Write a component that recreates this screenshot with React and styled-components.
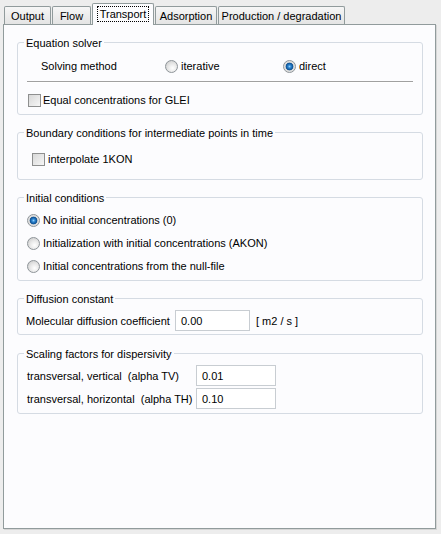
import React from "react"
import styled, { createGlobalStyle } from "styled-components"

const GlobalStyle = createGlobalStyle`
    body {
        margin: 0;
        background: #ededed;
        font-family: "Liberation Sans", Arial, sans-serif;
        font-size: 11px;
        color: #000;
    }
`

const Window = styled.div`
    width: 441px;
    height: 534px;
    padding: 3px 0 0 3px;
    box-sizing: border-box;
`

const TabBar = styled.div`
    display: flex;
    align-items: flex-end;
    height: 21px;
    padding-left: 1px;
`

const Tab = styled.div`
    box-sizing: border-box;
    width: ${(p) => p.$w}px;
    height: ${(p) => (p.$active ? 22 : 18)}px;
    margin-right: 1px;
    margin-bottom: ${(p) => (p.$active ? -1 : 0)}px;
    position: relative;
    z-index: ${(p) => (p.$active ? 2 : 0)};
    display: flex;
    align-items: center;
    justify-content: center;
    border: 1px solid #919b9c;
    border-bottom: none;
    border-radius: 2px 2px 0 0;
    background: ${(p) => (p.$active ? "#fcfcfe" : "linear-gradient(#f6f6f6, #e4e4e4)")};
    padding-top: 1px;
    padding-bottom: ${(p) => (p.$active ? 2 : 0)}px;
`

const FocusLabel = styled.span`
    outline: 1px dotted #000;
    outline-offset: 1px;
    padding: 0 1px;
`

const Panel = styled.div`
    box-sizing: border-box;
    width: 433px;
    height: 505px;
    border: 1px solid #919b9c;
    background: #fcfcfe;
    box-shadow: 1px 1px 0 #d6d6d6;
    padding: 17px 12px 0 13px;
    display: flex;
    flex-direction: column;
    gap: 17px;
`

const Group = styled.div`
    position: relative;
    border: 1px solid #d5dbe3;
    border-radius: 3px;
    padding: ${(p) => p.$pad};
    margin-top: ${(p) => p.$mt || 0}px;
    display: flex;
    flex-direction: column;
    gap: ${(p) => p.$gap || 0}px;
`

const Legend = styled.span`
    position: absolute;
    top: -6px;
    left: 6px;
    padding: 0 2px;
    background: #fcfcfe;
    line-height: 13px;
`

const SolverRow = styled.div`
    display: grid;
    grid-template-columns: 124px 118px auto;
    align-items: center;
    height: 20px;
    padding-left: 23px;
`

const Separator = styled.div`
    margin: 5px 9px 0;
    border-top: 1px solid #a0a0a0;
    border-bottom: 1px solid #fff;
`

const Option = styled.label`
    display: flex;
    align-items: center;
    gap: ${(p) => p.$gap || 2}px;
    height: 16px;
    margin-left: ${(p) => p.$indent || 0}px;
    margin-top: ${(p) => p.$top || 0}px;
`

const RadioMark = styled.span`
    flex: none;
    box-sizing: border-box;
    width: 13px;
    height: 13px;
    border-radius: 50%;
    border: 1px solid #8e9499;
    background: ${(p) =>
        p.$checked
            ? "radial-gradient(circle at 50% 50%, #8fd0ff 0, #2f86d0 1.5px, #0c4f92 3.5px, #d8d8d8 4.2px, #fafafa 100%)"
            : "radial-gradient(circle at 60% 65%, #ffffff 0, #e8e8e8 45%, #c4c4c4 100%)"};
`

const CheckMark = styled.span`
    flex: none;
    box-sizing: border-box;
    width: 13px;
    height: 13px;
    border: 1px solid #8e8f8f;
    background: linear-gradient(135deg, #d8d8d8, #f6f6f6);
`

const FieldRow = styled.div`
    display: grid;
    grid-template-columns: ${(p) => p.$cols};
    align-items: center;
    padding-left: ${(p) => p.$indent}px;
`

const NumberBox = styled.div`
    box-sizing: border-box;
    width: ${(p) => p.$w}px;
    height: 21px;
    border: 1px solid #c8cdd2;
    background: #fff;
    padding: 0 5px;
    display: flex;
    align-items: center;
`

const Unit = styled.span`
    padding-left: 6px;
`

function Radio({ checked, children, ...rest }) {
    return (
        <Option $gap={3} {...rest}>
            <RadioMark $checked={checked} />
            <span>{children}</span>
        </Option>
    )
}

function Check({ children, ...rest }) {
    return (
        <Option {...rest}>
            <CheckMark />
            <span>{children}</span>
        </Option>
    )
}

const tabs = [
    { name: "Output", w: 47 },
    { name: "Flow", w: 39 },
    { name: "Transport", w: 62, active: true },
    { name: "Adsorption", w: 62 },
    { name: "Production / degradation", w: 127 },
]

export default function App() {
    return (
        <Window>
            <GlobalStyle />
            <TabBar>
                {tabs.map((t) => (
                    <Tab key={t.name} $w={t.w} $active={t.active}>
                        {t.active ? <FocusLabel>{t.name}</FocusLabel> : t.name}
                    </Tab>
                ))}
            </TabBar>
            <Panel>
                <Group $pad="13px 0 6px">
                    <Legend>Equation solver</Legend>
                    <SolverRow>
                        <span>Solving method</span>
                        <Radio>iterative</Radio>
                        <Radio checked>direct</Radio>
                    </SolverRow>
                    <Separator />
                    <Check $indent={10} $top={9}>Equal concentrations for GLEI</Check>
                </Group>

                <Group $pad="18px 0 12px">
                    <Legend>Boundary conditions for intermediate points in time</Legend>
                    <Check $indent={14} $gap={3}>interpolate 1KON</Check>
                </Group>

                <Group $pad="14px 0 6px" $gap={7}>
                    <Legend>Initial conditions</Legend>
                    <Radio $indent={9} checked>No initial concentrations (0)</Radio>
                    <Radio $indent={9}>Initialization with initial concentrations (AKON)</Radio>
                    <Radio $indent={9}>Initial concentrations from the null-file</Radio>
                </Group>

                <Group $pad="11px 0 3px">
                    <Legend>Diffusion constant</Legend>
                    <FieldRow $cols="149px 75px auto" $indent={8}>
                        <span>Molecular diffusion coefficient</span>
                        <NumberBox $w={75}>0.00</NumberBox>
                        <Unit>[ m2 / s ]</Unit>
                    </FieldRow>
                </Group>

                <Group $pad="11px 0 4px" $gap={2} $mt={1}>
                    <Legend>Scaling factors for dispersivity</Legend>
                    <FieldRow $cols="169px 80px" $indent={9}>
                        <span>transversal, vertical &nbsp;(alpha TV)</span>
                        <NumberBox $w={80}>0.01</NumberBox>
                    </FieldRow>
                    <FieldRow $cols="169px 80px" $indent={9}>
                        <span>transversal, horizontal &nbsp;(alpha TH)</span>
                        <NumberBox $w={80}>0.10</NumberBox>
                    </FieldRow>
                </Group>
            </Panel>
        </Window>
    )
}
